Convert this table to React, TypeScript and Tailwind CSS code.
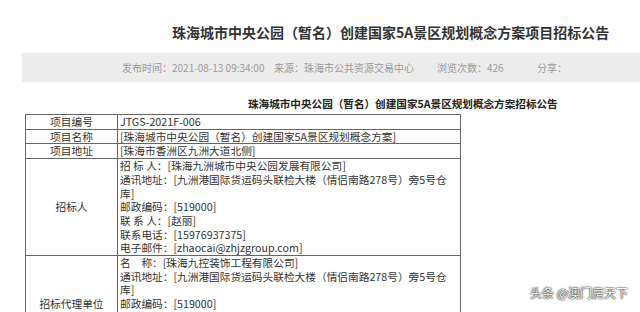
import React from "react";

const font = "font-['Noto_Sans_CJK_SC','Noto_Sans',sans-serif]";

const bidder = [
  "招 标 人：[珠海九洲城市中央公园发展有限公司]",
  "通讯地址：[九洲港国际货运码头联检大楼（情侣南路278号）旁5号仓",
  "库]",
  "邮政编码：[519000]",
  "联 系 人：[赵丽]",
  "联系电话：[15976937375]",
  "电子邮件：[zhaocai@zhjzgroup.com]",
];

const agent = [
  "名　称：[珠海九控装饰工程有限公司]",
  "通讯地址：[九洲港国际货运码头联检大楼（情侣南路278号）旁5号仓",
  "库]",
  "邮政编码：[519000]",
  "联 系 人：[陈工]",
  "联系电话：[0756-3322888]",
  "电子邮件：[jkzs@zhjzgroup.com]",
];

function Lines({ items }: { items: string[] }) {
  return (
    <>
      {items.map((t, i) => (
        <div key={i} className="whitespace-nowrap">
          {t}
        </div>
      ))}
    </>
  );
}

export default function App() {
  const label = "border border-[#666] text-center align-middle w-[92px]";
  const cell = "border border-[#666] pl-[2px] align-top";
  return (
    <div className={`relative h-[312px] overflow-hidden bg-white text-[#333] ${font}`}>
      {/* page title */}
      <div className="pt-[21px] pl-[172px] text-[14px] font-bold leading-[22px] text-[#333]">
        珠海城市中央公园（暂名）创建国家5A景区规划概念方案项目招标公告
      </div>

      {/* meta bar */}
      <div className="mt-[10px] ml-[22px] flex h-[29px] items-center bg-[#ececec] pl-[100px] text-[10px] text-[#9a9a9a]">
        <span className="w-[152px]">发布时间：2021-08-13 09:34:00</span>
        <span className="w-[163px]">来源：珠海市公共资源交易中心</span>
        <span className="w-[100px]">浏览次数：426</span>
        <span>分享：</span>
      </div>

      {/* notice title */}
      <div className="mt-[15px] pl-[248px] text-[10.6px] font-bold leading-[14px] text-[#222]">
        珠海城市中央公园（暂名）创建国家5A景区规划概念方案招标公告
      </div>

      {/* info table */}
      <table className="mt-[3px] ml-[25px] w-[436px] border-collapse text-[10.7px] leading-[13.7px]">
        <tbody>
          <tr>
            <td className={label}>项目编号</td>
            <td className={cell}>JTGS-2021F-006</td>
          </tr>
          <tr>
            <td className={label}>项目名称</td>
            <td className={cell}>[珠海城市中央公园（暂名）创建国家5A景区规划概念方案]</td>
          </tr>
          <tr>
            <td className={label}>项目地址</td>
            <td className={cell}>[珠海市香洲区九洲大道北侧]</td>
          </tr>
          <tr>
            <td className={label}>招标人</td>
            <td className={cell}>
              <Lines items={bidder} />
            </td>
          </tr>
          <tr>
            <td className={label}>招标代理单位</td>
            <td className={cell}>
              <Lines items={agent} />
            </td>
          </tr>
        </tbody>
      </table>

      {/* watermark */}
      <div className="absolute right-[12px] bottom-[12px] text-[12px] leading-[14px] text-white [text-shadow:0_0_2px_#000,0_0_1px_#000]">
        头条 @澳门房天下
      </div>
    </div>
  );
}
